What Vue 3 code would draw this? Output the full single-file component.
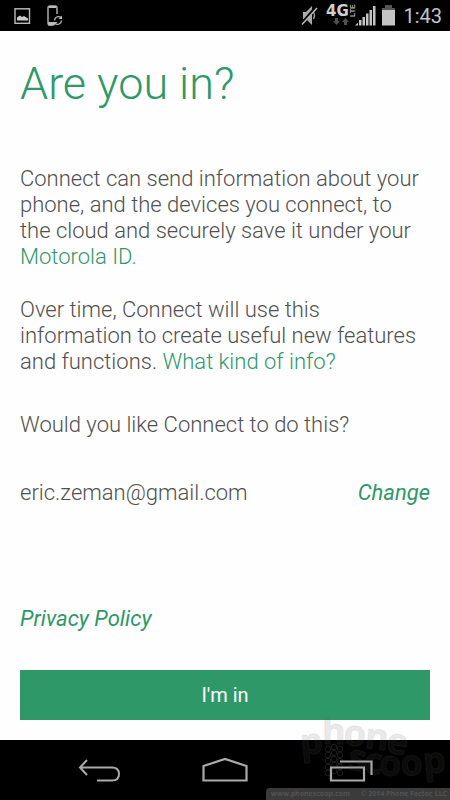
<script setup>
const paragraphs = {
  first: 'Connect can send information about your phone, and the devices you connect, to the cloud and securely save it under your ',
  second: 'Over time, Connect will use this information to create useful new features and functions. '
}
const letters = [
  { c: 'p', x: 301, y: 755, r: -5 },
  { c: 'h', x: 322, y: 744, r: 0 },
  { c: 'o', x: 343, y: 745, r: 4 },
  { c: 'n', x: 364, y: 748, r: 6 },
  { c: 'e', x: 385, y: 752, r: 10 },
  { c: 's', x: 347, y: 769, r: 8 },
  { c: 'c', x: 363, y: 773, r: 5 },
  { c: 'o', x: 379, y: 776, r: 0 },
  { c: 'o', x: 401, y: 776, r: -3 },
  { c: 'p', x: 424, y: 774, r: -6 }
]
const dots = []
for (let row = 0; row < 5; row++) {
  for (let col = 0; col < 3; col++) {
    dots.push({ x: 328 + col * 6, y: 749 + row * 6 - (col % 2 ? 2 : 0) })
  }
}
</script>

<template>
  <div class="screen">
    <header class="status">
      <svg width="60" height="31" viewBox="0 0 60 31" aria-hidden="true">
        <rect x="5" y="8.800" width="14.500" height="14.500" fill="none" stroke="#bbb" stroke-width="1.400" />
        <path d="M7 20.500v-3l3-2 2 1.500 2-1 4 2.500v2z" fill="#ccc" />
        <path d="M47 14V8q0-2-2-2h-5q-2 0-2 2v15q0 2 2 2h3" fill="none" stroke="#aaa" stroke-width="1.500" />
        <path d="M38 22h6v3.500h-6zM39 6h7v2h-7z" fill="#bbb" />
        <path d="M44.500 20.500a4 4 0 0 1 6.500-3M51.500 20.500a4 4 0 0 1-6.500 3" fill="none" stroke="#bbb" stroke-width="1.300" />
        <path d="M52 15.500v3.500h-3.500zM44 25.500V22h3.500z" fill="#bbb" />
      </svg>
      <div class="group">
        <svg width="100" height="31" viewBox="300 0 100 31" aria-hidden="true">
          <path d="M304 12h3l6-6v19l-6-6h-3z" fill="#aaa" />
          <path d="M314.500 12q2 3.500 0 7" fill="none" stroke="#999" stroke-width="1.300" />
          <path d="M303 23.500 317 7" stroke="#000" stroke-width="3" />
          <path d="M303 24.500 318 8" stroke="#bbb" stroke-width="1.500" />
          <text class="net" x="327" y="16">4G</text>
          <text class="lte" x="356" y="17" transform="rotate(-90 356 17)">LTE</text>
          <path d="M336 18h3v3h2l-3.500 4-3.500-4h2zM345 25h3v-3h2l-3.500-4-3.500 4h2z" fill="#505050" />
          <path d="M356 25.500l3-3v3zM360 20h2.500v5.500H360zM363.500 17h2.500v8.500h-2.500zM367 13.500h2.500v12H367zM370.500 10h2.500v15.500h-2.500zM374 6h2.500v19.500H374z" fill="#c4c4c4" />
          <path d="M386 6h7v2h3v17.500h-13V8h3z" fill="#c4c4c4" />
          <path d="M386 5h7v3h3v2h-13V8h3z" fill="#555" />
        </svg>
        <time class="clock">1:43</time>
      </div>
    </header>

    <main class="content">
      <h1>Are you in?</h1>
      <p class="intro">{{ paragraphs.first }}<a href="#id">Motorola ID.</a></p>
      <p class="more">{{ paragraphs.second }}<a href="#info">What kind of info?</a></p>
      <p class="question">Would you like Connect to do this?</p>
      <div class="account">
        <span>eric.zeman@gmail.com</span>
        <a class="strong" href="#change">Change</a>
      </div>
      <a class="strong privacy" href="#privacy">Privacy Policy</a>
      <button class="accept" type="button">I'm in</button>
    </main>

    <nav class="navbar">
      <button type="button" aria-label="Back">
        <svg width="46" height="30" viewBox="77 756 46 30"><path d="M88 761l-7 7.500 7 7.500M81 768.500h32q7 0 7 6.500t-7 6.500H98" fill="none" stroke="#aaa" stroke-width="2" /></svg>
      </button>
      <button type="button" aria-label="Home">
        <svg width="50" height="30" viewBox="200 756 50 30"><path d="M203.500 781.500V767l21.500-7 21.500 7v14.500z" fill="none" stroke="#aaa" stroke-width="2.200" /></svg>
      </button>
      <button type="button" aria-label="Recent apps">
        <svg width="46" height="30" viewBox="328 756 46 30"><path d="M331 768.500h33v13h-33zM340 762.500h31.500V776" fill="none" stroke="#aaa" stroke-width="2.200" /></svg>
      </button>
    </nav>

    <div class="watermark">
      <svg width="155" height="88" viewBox="295 700 155 88" aria-hidden="true">
        <g class="mark">
          <text v-for="(l, i) in letters" :key="i" :x="l.x" :y="l.y" :transform="`rotate(${l.r} ${l.x} ${l.y})`">{{ l.c }}</text>
        </g>
        <g class="dots">
          <circle v-for="(d, i) in dots" :key="i" :cx="d.x" :cy="d.y" r="2.800" />
        </g>
      </svg>
      <small><span>www.phonescoop.com</span><span>© 2014 Phone Factor, LLC</span></small>
    </div>
  </div>
</template>

<style>
body { margin: 0; background: #fff; }
</style>

<style scoped>
.screen {
  position: relative;
  display: flex;
  flex-direction: column;
  min-height: 100vh;
  box-sizing: border-box;
  background: #fefefe;
  color: #505050;
  font-family: Roboto, "Liberation Sans", sans-serif;
  font-size: 22px;
  font-weight: 300;
  line-height: 26px;
}
.status {
  display: flex;
  justify-content: space-between;
  height: 31px;
  padding: 0 8px 0 10px;
  background: #000;
}
.group { display: flex; align-items: center; gap: 4px; }
svg { display: block; }
.net { fill: #d0d0d0; font: 700 15px "DejaVu Sans", sans-serif; }
.lte { fill: #b0b0b0; font: 700 7px "Liberation Sans", sans-serif; }
.clock { color: #c4c4c4; font-size: 20px; font-weight: 400; }
.content {
  display: flex;
  flex: 1;
  flex-direction: column;
  padding: 25px 20px 20px;
}
h1 { margin: 0; color: #2e9868; font-size: 45px; font-weight: 300; line-height: 56px; }
p { margin: 0; padding-right: 6px; }
.intro { margin-top: 54px; }
.more { margin-top: 27px; }
.question { margin-top: 37px; }
a { color: #2e9868; text-decoration: none; }
.account { display: flex; justify-content: space-between; margin-top: 42px; }
.strong { font-style: italic; font-weight: 400; }
.privacy { align-self: flex-start; margin-top: auto; }
.accept {
  height: 50px;
  margin-top: 38px;
  padding: 0;
  border: 0;
  background: #2e9868;
  color: #fff;
  font: 400 20px/26px Roboto, "Liberation Sans", sans-serif;
}
.navbar {
  display: flex;
  justify-content: space-between;
  height: 60px;
  padding: 0 76px;
  background: #000;
}
.navbar button { padding: 0; border: 0; background: none; }
.watermark {
  position: absolute;
  right: 0;
  bottom: 0;
  display: flex;
  flex-direction: column;
  align-items: flex-end;
  pointer-events: none;
}
.mark {
  fill: rgba(90, 90, 90, 0.12);
  stroke: rgba(128, 128, 128, 0.12);
  stroke-width: 1px;
  font: 700 36px "Open Sans", sans-serif;
}
.dots { fill: none; stroke: rgba(128, 128, 128, 0.22); }
small {
  display: flex;
  justify-content: space-between;
  box-sizing: border-box;
  width: 184px;
  padding: 0 3px 0 5px;
  border-radius: 4px 0 0 0;
  background: #3b3b3b;
  color: #525252;
  font: 700 7px/12px "Noto Sans", sans-serif;
  white-space: nowrap;
}
</style>
